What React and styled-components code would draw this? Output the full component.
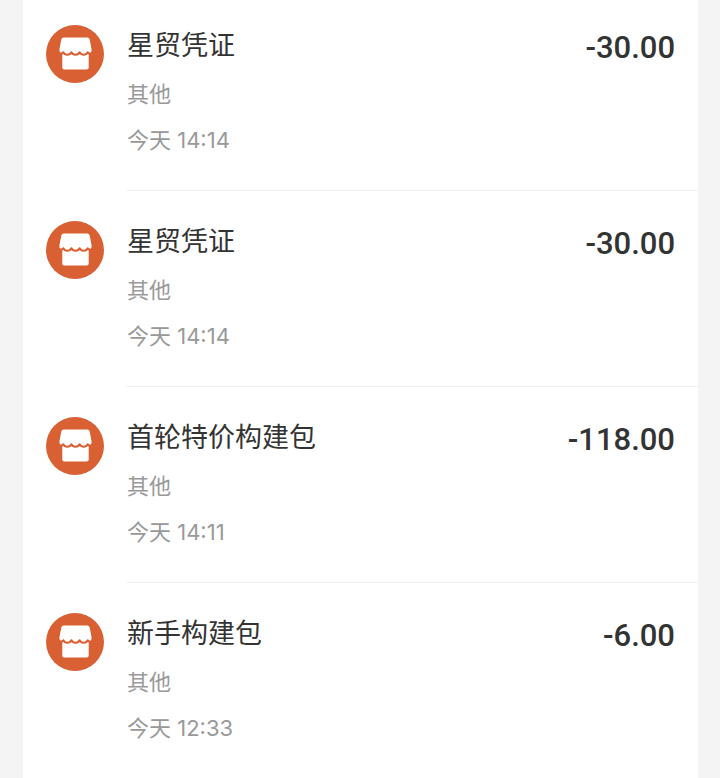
import React from 'react';
import styled, { createGlobalStyle } from 'styled-components';

const GlobalStyle = createGlobalStyle`
  * {
    box-sizing: border-box;
  }

  body {
    margin: 0;
    background: #f4f4f4;
    color: #333333;
    font-family: Inter, 'Noto Sans CJK SC', sans-serif;
  }
`;

const Page = styled.main`
  display: flex;
  min-height: 100vh;
  padding: 0 22px 0 23px;
`;

const BillList = styled.ul`
  flex: 1;
  margin: 0;
  padding: 0 0 0 23px;
  list-style: none;
  background: #ffffff;
`;

const BillItem = styled.li`
  display: flex;
  align-items: flex-start;
  gap: 22px;
  padding-top: 30px;

  &:first-child {
    padding-top: 25px;
  }
`;

const CategoryIcon = styled.svg`
  flex: none;
  width: 58px;
  height: 58px;
`;

const Content = styled.div`
  flex: 1;
  display: flex;
  justify-content: space-between;
  min-width: 0;
  padding: 1px 23px 27px 1px;
  border-bottom: 1px solid #f0f0f0;

  ${BillItem}:last-child & {
    padding-bottom: 16px;
    border-bottom: none;
  }
`;

const Title = styled.h2`
  margin: 0 0 5px;
  font-size: 27px;
  font-weight: 400;
  line-height: 40px;
`;

const Meta = styled.p`
  margin: 0;
  color: #999999;
  font-size: 22px;
  line-height: 46px;
`;

const Amount = styled.span`
  flex: none;
  font-family: Roboto, sans-serif;
  font-size: 31px;
  font-weight: 500;
  line-height: 44px;
`;

const bills = [
  { id: 1, title: '星贸凭证', category: '其他', time: '今天 14:14', amount: '-30.00' },
  { id: 2, title: '星贸凭证', category: '其他', time: '今天 14:14', amount: '-30.00' },
  { id: 3, title: '首轮特价构建包', category: '其他', time: '今天 14:11', amount: '-118.00' },
  { id: 4, title: '新手构建包', category: '其他', time: '今天 12:33', amount: '-6.00' },
];

const StoreIcon = () => (
  <CategoryIcon viewBox="0 0 58 58" aria-hidden="true">
    <circle cx="29" cy="29" r="29" fill="#d96032" />
    <path
      fill="#ffffff"
      d="M17.800 12.500H41.200Q43.200 12.500 43.700 14.500L45.600 24.500Q45.800 28 42.700 28.500V42.500Q42.700 44.500 40.700 44.500H18.300Q16.300 44.500 16.300 42.500V28.500Q13.200 28 13.400 24.500L15.300 14.500Q15.800 12.500 17.800 12.500Z"
    />
    <path
      fill="none"
      stroke="#d96032"
      strokeWidth="2"
      strokeLinejoin="round"
      d="M14 28.800Q16.500 28.800 17.300 27.200Q18.500 29.800 21.300 29.800Q24.200 29.800 25.400 27.200Q26.600 29.800 29.500 29.800Q32.400 29.800 33.600 27.200Q34.800 29.800 37.700 29.800Q40.500 29.800 41.700 27.200Q42.500 28.800 45 28.800"
    />
  </CategoryIcon>
);

const App = () => (
  <>
    <GlobalStyle />
    <Page>
      <BillList>
        {bills.map((bill) => (
          <BillItem key={bill.id}>
            <StoreIcon />
            <Content>
              <div>
                <Title>{bill.title}</Title>
                <Meta>{bill.category}</Meta>
                <Meta>{bill.time}</Meta>
              </div>
              <Amount>{bill.amount}</Amount>
            </Content>
          </BillItem>
        ))}
      </BillList>
    </Page>
  </>
);

export default App;
